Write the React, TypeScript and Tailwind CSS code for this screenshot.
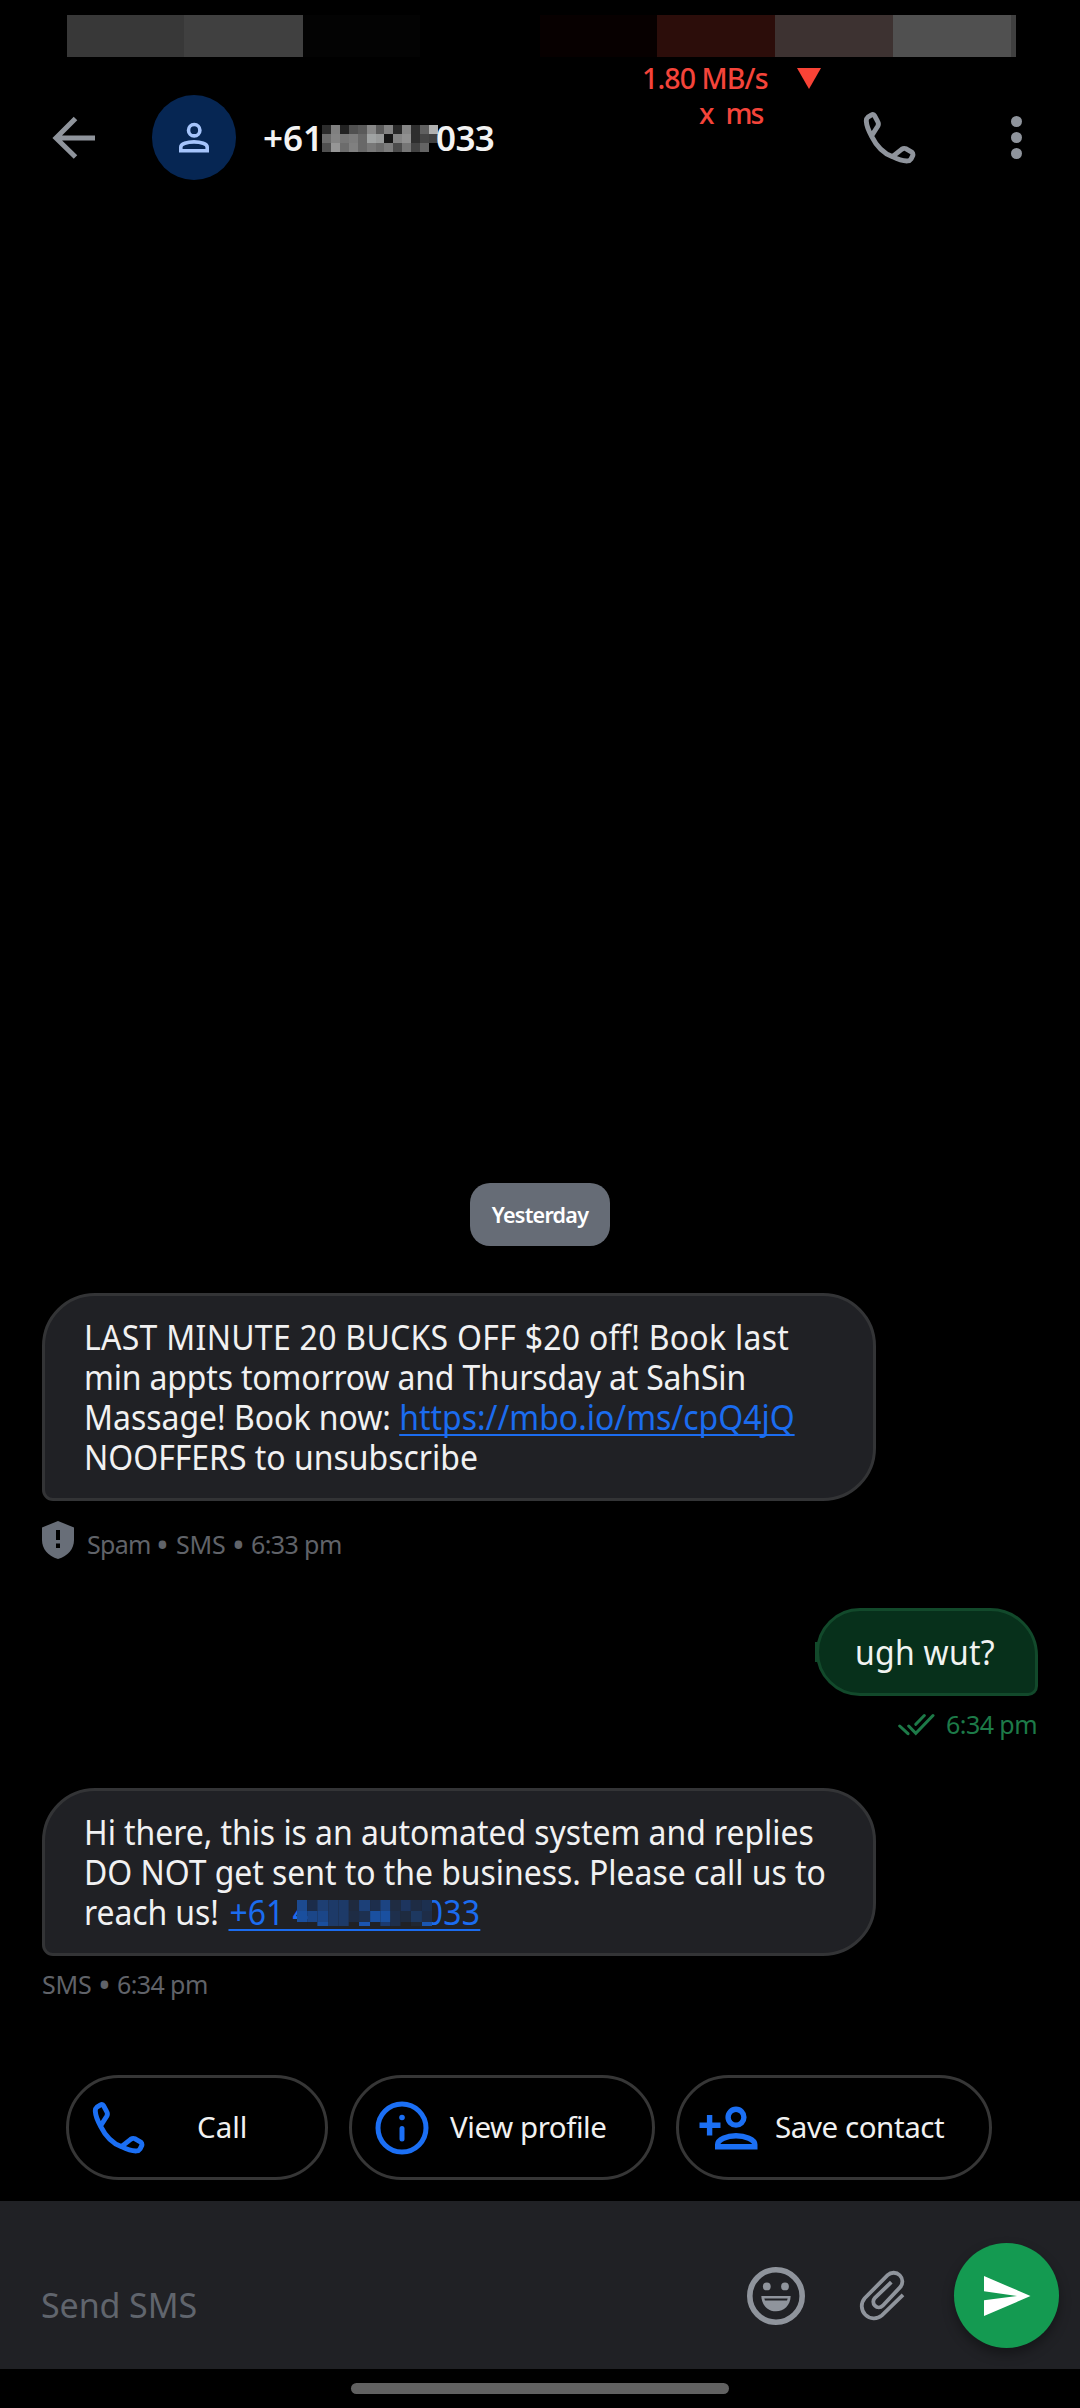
import React from "react";
import clsx from "clsx";

const statusBlocks = [
  "w-[117px] bg-[#383838]",
  "w-[119px] bg-[#404040]",
  "w-[117px] bg-[#030303]",
  "w-[120px] bg-black",
  "w-[117px] bg-[#070000]",
  "w-[118px] bg-[#2c0d0a]",
  "w-[118px] bg-[#3d3231]",
  "w-[118px] bg-[#505050]",
  "w-[5px] bg-[#404040]",
];

const titleMosaic = [
  ["#2c2c2c", "#808080", "#222222", "#505050", "#5a5a5a", "#888888", "#5a5a5a", "#828282", "#282828", "#868686", "#2e2e2e", "#606060", "#b0b0b0"],
  ["#6c6c6c", "#848484", "#767676", "#7c7c7c", "#686868", "#a0a3a3", "#989a9a", "#141414", "#848484", "#909090", "#2e2e2e", "#464646", "#404040"],
  ["#505050", "#969696", "#6c6c6c", "#808080", "#686868", "#787878", "#6c6c6c", "#7c7c7c", "#4c4c4c", "#767676", "#424242", "#646464", "transparent"],
];

const linkMosaic = [
  ["#1c4a90", "#1b2c4a", "#1e3f73", "#1d3a68", "#1d3a68", "#1f2a3e", "#1c4078", "#1d2e4c", "#1c4482", "#1f2c42", "#1d355f", "#1e2c44", "#1c3050"],
  ["#1a4f9e", "#1b4688", "#1b4688", "#1d3a68", "#1d3a68", "#1e2c44", "#1d3050", "#1a50a0", "#1a50a0", "#1e2f4c", "#1e2b40", "#1d3860", "#1e2d48"],
  ["#202125", "#202125", "#1a4f9e", "#1d3a68", "#1d3a68", "#202125", "#1b55b0", "#202125", "#1b3a70", "#1e2f4c", "#202125", "#202733", "#1a56b0"],
];

type MosaicProps = { rows: string[][]; rowClassName: string; className?: string };

const Mosaic: React.FC<MosaicProps> = ({ rows, rowClassName, className }) => (
  <span className={clsx("flex flex-col overflow-hidden", className)}>
    {rows.map((row, y) => (
      <span key={y} className={clsx("flex shrink-0", rowClassName)}>
        {row.map((color, x) => (
          <span key={x} className="h-full flex-1" style={{ backgroundColor: color }} />
        ))}
      </span>
    ))}
  </span>
);

const PhoneIcon: React.FC<{ className?: string }> = ({ className }) => (
  <svg viewBox="37 28 162 164" className={className} fill="none" stroke="currentColor" strokeWidth="15" strokeLinejoin="round">
    <path d="M63 104 L82 74 Q86 67 82 60 L73 43 Q69 36 62 40 L52 46 Q47 50 47 58 C48 76 54 88 63 104 C78 134 100 157 127 167 C145 176 160 181 174 180 Q180 180 184 174 L189 164 Q191 158 186 153 L169 143 Q162 140 156 144 L127 167" />
  </svg>
);

const BackIcon = () => (
  <svg viewBox="0 0 44 44" className="h-11 w-11" fill="none" stroke="currentColor" strokeWidth="5">
    <path d="M23.5 2.5 L4 22 L23.5 41 M4 22 H43" />
  </svg>
);

const PersonIcon = () => (
  <svg viewBox="0 0 30 32" className="h-8 w-[30px]" fill="none" stroke="currentColor" strokeWidth="3.6">
    <circle cx="15.2" cy="8.2" r="5.7" />
    <path d="M1.8 28.7 V25.1 C1.8 21.9 8.2 19.9 15 19.9 C21.8 19.9 28.2 21.9 28.2 25.1 V28.7 Z" />
  </svg>
);

const InfoIcon = () => (
  <svg viewBox="0 0 54 54" className="h-[54px] w-[54px]" fill="none" stroke="currentColor" strokeWidth="5" strokeLinecap="round">
    <circle cx="27" cy="27" r="24" />
    <path d="M27 27.5 V38" />
    <circle cx="27" cy="16.5" r="2.8" fill="currentColor" stroke="none" />
  </svg>
);

const AddPersonIcon = () => (
  <svg viewBox="0 0 59 44" className="h-11 w-[59px]" fill="none" stroke="currentColor" strokeWidth="5.4">
    <path d="M0.5 19.2 H21.5 M10.6 9 V29.6" />
    <circle cx="37" cy="11.2" r="7.9" />
    <path d="M18.7 40.7 V38.5 C18.7 33.5 28 29.7 37 29.7 C46 29.7 55.8 33.5 55.8 38.5 V40.7 Z" />
  </svg>
);

const ShieldIcon = () => (
  <svg viewBox="0 0 32 38" className="h-[38px] w-8 shrink-0">
    <path fill="#686e78" d="M16 0 L32 6.5 V19 C32 28 26 35 16 38 C6 35 0 28 0 19 V6.5 Z" />
    <path fill="#000" d="M14 9 H18 V19 H14 Z M14 22.5 H18 V27 H14 Z" />
  </svg>
);

const DeliveredIcon = () => (
  <svg viewBox="0 0 37 23" className="h-[23px] w-[37px]" fill="none" stroke="currentColor" strokeWidth="3" strokeLinecap="round">
    <path d="M1.7 13 L10 20.7 M10.7 13 L17.8 20.3 L35 2.5 M17.8 11.3 L26.3 2.5" />
  </svg>
);

const SmileyIcon = () => (
  <svg viewBox="0 0 58 58" className="h-[58px] w-[58px]">
    <circle cx="29" cy="29" r="26.2" fill="none" stroke="currentColor" strokeWidth="5.6" />
    <circle cx="19.8" cy="19.4" r="3.9" fill="currentColor" />
    <circle cx="38" cy="19.4" r="3.9" fill="currentColor" />
    <path fill="currentColor" d="M14.3 29 H43.7 C43.2 38.5 37 44.3 29 44.3 C21 44.3 14.8 38.5 14.3 29 Z" />
    <path d="M17.3 31.6 H40.7 L40 33.4 H18 Z" fill="#202125" />
  </svg>
);

const ClipIcon = () => (
  <svg viewBox="0 0 46 52" className="h-[52px] w-[46px]" fill="none" stroke="currentColor" strokeWidth="3.8">
    <path d="M44 24.9 L22.9 45.4 A12.2 12.2 0 0 1 5.7 28.2 L28.6 5.2 A8.7 8.7 0 0 1 41 17.4 L23.7 35.7 A5.5 5.5 0 0 1 15.9 27.9 L32.3 12.2" />
  </svg>
);

const SendIcon = () => (
  <svg viewBox="0 0 47 40" className="ml-[2px] h-10 w-[47px]">
    <path fill="#fff" d="M0 0 L46.5 20 L0 40 V24.3 L33 20 L0 15.3 Z" />
  </svg>
);

const bubbleText = "block origin-left scale-x-[0.926] whitespace-nowrap text-[34.5px] leading-10";

const StatusBar = () => (
  <div className="flex h-[57px] pt-[15px] pl-[67px]">
    {statusBlocks.map((block, i) => (
      <div key={i} className={block} />
    ))}
  </div>
);

// floating network meter, drawn over the header
const NetMeter = () => (
  <div className="absolute top-[61px] left-[642px] text-[28.5px] leading-[35px] font-medium whitespace-pre text-[#f4443a]">
    <div className="flex items-center gap-[28px]">
      <span className="w-[127px] tracking-[-0.9px]">1.80 MB/s</span>
      <svg viewBox="0 0 24 21" className="h-[21px] w-6">
        <path fill="#f94336" d="M0 0 H24 L12 21 Z" />
      </svg>
    </div>
    <div className="flex gap-[11px] pl-[57px]">
      <span>x</span>
      <span className="tracking-[-2px]">ms</span>
    </div>
  </div>
);

const Header = () => (
  <header className="flex h-[161px] items-center pl-[52px] text-[#8f949c]">
    <BackIcon />
    <div className="ml-[56px] flex h-[85px] w-[84px] items-center justify-center rounded-full bg-[#062653] text-[#a5c4fb]">
      <PersonIcon />
    </div>
    <div className="ml-[27px] flex h-[49px] items-center text-[35px] font-[560] text-[#f3f3f3]">
      <span className="mt-px w-[59px]">+61</span>
      <Mosaic rows={titleMosaic} rowClassName="h-[9px]" className="mt-[2px] h-[27px] w-[116px]" />
      <span className="mt-px -ml-[2px] tracking-[-0.6px]">033</span>
    </div>
    <PhoneIcon className="ml-auto h-[54px] w-[53px]" />
    <div className="mr-[58px] ml-[95px] flex flex-col gap-[5px]">
      <span className="h-[11px] w-[11px] rounded-full bg-current" />
      <span className="h-[11px] w-[11px] rounded-full bg-current" />
      <span className="h-[11px] w-[11px] rounded-full bg-current" />
    </div>
  </header>
);

const Dot = () => <span className="w-[27px] text-center text-[34px] leading-10">•</span>;

const Incoming: React.FC<{ className?: string; children: React.ReactNode }> = ({ className, children }) => (
  <div
    className={clsx(
      "ml-[42px] w-[834px] rounded-[53px] rounded-bl-[11px] border-[3px] border-[#333436] bg-[#202125] px-[39px] pt-[21px] text-[#f1f1f2]",
      className
    )}
  >
    {children}
  </div>
);

const Thread = () => (
  <main className="flex flex-1 flex-col pt-[965px] text-[25px] leading-10 text-[#606369]">
    <div className="flex h-[63px] w-[140px] items-center justify-center self-center rounded-[20px] bg-[#666c76] text-[21.5px] font-semibold tracking-[-0.75px] text-white">
      Yesterday
    </div>

    <Incoming className="mt-[47px] h-[208px]">
      <span className={clsx(bubbleText, "tracking-[0.32px]")}>LAST MINUTE 20 BUCKS OFF $20 off! Book last</span>
      <span className={clsx(bubbleText, "tracking-[-0.17px]")}>min appts tomorrow and Thursday at SahSin</span>
      <span className={bubbleText}>
        Massage! Book now:{" "}
        <a className="text-[#1b6cef] underline decoration-[1.5px] underline-offset-[4px] [text-decoration-skip-ink:none]">
          https://mbo.io/ms/cpQ4jQ
        </a>
      </span>
      <span className={bubbleText}>NOOFFERS to unsubscribe</span>
    </Incoming>
    <div className="mt-[20px] ml-[42px] flex h-[38px]">
      <ShieldIcon />
      <div className="mt-[3px] ml-[13px] flex">
        <span className="w-[62px] tracking-[-0.7px]">Spam</span>
        <Dot />
        <span className="w-[49px] tracking-[-0.2px]">SMS</span>
        <Dot />
        <span className="-ml-px tracking-[-0.6px]">6:33 pm</span>
      </div>
    </div>

    <div className="mt-[49px] mr-[42px] flex self-end">
      <span className="mt-[34px] -mr-[4px] h-5 w-[5px] bg-[#12492b]" />
      <div className="h-[88px] w-[222px] rounded-l-[49px] rounded-tr-[53px] rounded-br-[11px] border-[3px] border-[#12492b] bg-[#07301b] pt-[21px] pl-[36px] text-[#f0f3f1]">
        <span className={clsx(bubbleText, "tracking-[0.3px]")}>ugh wut?</span>
      </div>
    </div>
    <div className="mt-[8px] mr-[43px] flex h-10 items-center gap-[11px] self-end text-[#1d7a48]">
      <DeliveredIcon />
      <span className="tracking-[-0.55px]">6:34 pm</span>
    </div>

    <Incoming className="mt-[44px] h-[168px]">
      <span className={clsx(bubbleText, "tracking-[-0.05px]")}>Hi there, this is an automated system and replies</span>
      <span className={clsx(bubbleText, "tracking-[-0.04px]")}>DO NOT get sent to the business. Please call us to</span>
      <span className={clsx(bubbleText, "flex")}>
        <span className="w-[156px] tracking-[-0.1px]">reach us!</span>
        <a className="flex h-[39px] w-[272px] border-b-2 border-[#1b6cef] text-[#1b6cef]">
          <span className="w-[74px] pl-px">+61 4</span>
          <Mosaic rows={linkMosaic} rowClassName="h-[11px]" className="z-10 mt-[8px] h-[26px] w-[147px]" />
          <span className="-ml-[8px] tracking-[0.3px]">033</span>
        </a>
      </span>
    </Incoming>
    <div className="mt-[8px] ml-[42px] flex">
      <span className="w-[49px] tracking-[-0.2px]">SMS</span>
      <Dot />
      <span className="-ml-px tracking-[-0.6px]">6:34 pm</span>
    </div>
  </main>
);

const chip = "flex h-[105px] items-center rounded-full border-[3px] border-[#363636] text-[#1b6ff4]";
const chipLabel = "text-[29.5px] text-[#f1f1f1]";

const QuickActions = () => (
  <div className="flex gap-[21px] pb-[21px] pl-[66px] whitespace-nowrap">
    <button className={clsx(chip, "w-[262px] pl-[23px]")}>
      <PhoneIcon className="h-[54px] w-[53px]" />
      <span className={clsx(chipLabel, "ml-[52px]")}>Call</span>
    </button>
    <button className={clsx(chip, "w-[306px] pl-[23px]")}>
      <InfoIcon />
      <span className={clsx(chipLabel, "ml-[21px] tracking-[-0.45px]")}>View profile</span>
    </button>
    <button className={clsx(chip, "w-[316px] pl-[20px]")}>
      <AddPersonIcon />
      <span className={clsx(chipLabel, "ml-[17px] tracking-[-0.42px]")}>Save contact</span>
    </button>
  </div>
);

const Composer = () => (
  <div className="flex h-[168px] items-center bg-[#202125] pl-[41px] text-[#8f949c]">
    <span className="mt-[40px] text-[34px] leading-10 tracking-[-0.1px] text-[#60656d]">Send SMS</span>
    <div className="ml-auto flex items-center pt-[21px] pr-[21px]">
      <SmileyIcon />
      <div className="mr-[49px] ml-[54px]">
        <ClipIcon />
      </div>
      <button className="flex h-[105px] w-[105px] items-center justify-center rounded-full bg-[#149a51] shadow-[0_6px_12px_rgba(0,0,0,0.35)]">
        <SendIcon />
      </button>
    </div>
  </div>
);

export default function App() {
  return (
    <div className="relative flex h-[2408px] w-[1080px] flex-col overflow-hidden bg-black font-['Noto_Sans',sans-serif]">
      <StatusBar />
      <Header />
      <NetMeter />
      <Thread />
      <QuickActions />
      <Composer />
      <div className="flex h-[39px] justify-center pt-[14px]">
        <div className="h-[11px] w-[378px] rounded-full bg-[#616161]" />
      </div>
    </div>
  );
}
